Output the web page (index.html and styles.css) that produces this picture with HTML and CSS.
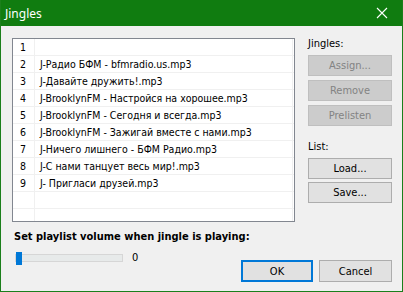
FILE: index.html
```html
<!DOCTYPE html>
<html lang="en">

<head>
    <meta charset="UTF-8">
    <title>Jingles</title>
    <link rel="stylesheet" href="styles.css">
</head>

<body>
    <div class="window">
        <div class="titlebar">
            <span class="title">Jingles</span>
            <svg class="close" width="12" height="12" viewBox="0 0 12 12">
                <path d="M1 1 L11 11 M11 1 L1 11" stroke="#fff" stroke-width="1.1" fill="none" />
            </svg>
        </div>

        <div class="content">
            <div class="top">
                <div class="list">
                    <div class="row"><span class="num">1</span><span class="name"></span></div>
                    <div class="row"><span class="num">2</span><span class="name">J-Радио БФМ - bfmradio.us.mp3</span></div>
                    <div class="row"><span class="num">3</span><span class="name">J-Давайте дружить!.mp3</span></div>
                    <div class="row"><span class="num">4</span><span class="name">J-BrooklynFM - Настройся на хорошее.mp3</span></div>
                    <div class="row"><span class="num">5</span><span class="name">J-BrooklynFM - Сегодня и всегда.mp3</span></div>
                    <div class="row"><span class="num">6</span><span class="name">J-BrooklynFM - Зажигай вместе с нами.mp3</span></div>
                    <div class="row"><span class="num">7</span><span class="name">J-Ничего лишнего - БФМ Радио.mp3</span></div>
                    <div class="row"><span class="num">8</span><span class="name">J-С нами танцует весь мир!.mp3</span></div>
                    <div class="row"><span class="num">9</span><span class="name">J- Пригласи друзей.mp3</span></div>
                    <div class="row"><span class="num"></span><span class="name"></span></div>
                    <div class="row"><span class="num"></span><span class="name"></span></div>
                </div>

                <div class="side">
                    <div class="side-label">Jingles:</div>
                    <button class="btn" disabled>Assign...</button>
                    <button class="btn" disabled>Remove</button>
                    <button class="btn" disabled>Prelisten</button>
                    <div class="side-label list-label">List:</div>
                    <button class="btn">Load...</button>
                    <button class="btn">Save...</button>
                </div>
            </div>

            <div class="volume-label">Set playlist volume when jingle is playing:</div>

            <div class="bottom">
                <div class="slider">
                    <div class="track"><div class="thumb"></div></div>
                    <span class="value">0</span>
                </div>
                <div class="actions">
                    <button class="btn btn-ok">OK</button>
                    <button class="btn btn-cancel">Cancel</button>
                </div>
            </div>
        </div>
    </div>
</body>

</html>
```

FILE: styles.css
```css
body {
    margin: 0;
    font-family: "DejaVu Sans Condensed", "DejaVu Sans", sans-serif;
    font-size: 11px;
    color: #000;
}

.window {
    width: 403px;
    height: 292px;
    box-sizing: border-box;
    border: 1px solid #1b7f1b;
    border-top: none;
    background: #f0f0f0;
    overflow: hidden;
}

.titlebar {
    height: 26px;
    background: #107c10;
    color: #fff;
    display: flex;
    align-items: center;
    justify-content: space-between;
    padding: 0 14px 0 4px;
}

.title {
    font-family: "Noto Sans", sans-serif;
    font-size: 12px;
}

.close {
    display: block;
}

.content {
    padding: 12px 10px 0 11px;
}

.top {
    display: flex;
}

.list {
    width: 283px;
    height: 184px;
    box-sizing: border-box;
    border: 1px solid #828790;
    background: #fff;
    overflow: hidden;
    font-size: 10.5px;
}

.row {
    display: flex;
    height: 16px;
    border-bottom: 1px solid #f0f0f0;
    line-height: 16px;
}

.num {
    width: 14px;
    padding-left: 7px;
    border-right: 1px solid #f0f0f0;
}

.name {
    width: 252px;
    padding-left: 5px;
    border-right: 1px solid #f0f0f0;
    white-space: nowrap;
}

.side {
    width: 84px;
    margin-left: 13px;
    display: flex;
    flex-direction: column;
}

.side-label {
    height: 15px;
    margin: 0 0 2px 0;
    line-height: 12px;
}

.list-label {
    margin-top: 11px;
    margin-bottom: 2px;
}

.btn {
    height: 21px;
    margin-bottom: 4px;
    padding: 0;
    border: 1px solid #adadad;
    background: #e1e1e1;
    font-family: "DejaVu Sans Condensed", "DejaVu Sans", sans-serif;
    font-size: 11px;
    color: #000;
}

.btn:disabled {
    border-color: #bfbfbf;
    background: #cccccc;
    color: #838383;
}

.side .btn:nth-of-type(n+4) {
    margin-bottom: 3px;
}

.volume-label {
    margin-top: 8px;
    margin-left: 2px;
    font-weight: bold;
    line-height: 14px;
}

.bottom {
    display: flex;
    justify-content: space-between;
}

.slider {
    display: flex;
    align-items: center;
    margin-top: 7px;
    margin-left: 3px;
    height: 13px;
}

.track {
    position: relative;
    width: 108px;
    height: 8px;
    box-sizing: border-box;
    border: 1px solid #d6d6d6;
    background: #e7eaea;
}

.thumb {
    position: absolute;
    left: 0;
    top: -3px;
    width: 6px;
    height: 13px;
    background: #0078d7;
}

.value {
    margin-left: 9px;
}

.actions {
    display: flex;
    gap: 6px;
    margin-top: 16px;
}

.actions .btn {
    height: 22px;
    margin: 0;
}

.btn-ok {
    width: 72px;
    border: 2px solid #0078d7;
}

.btn-cancel {
    width: 73px;
}
```
